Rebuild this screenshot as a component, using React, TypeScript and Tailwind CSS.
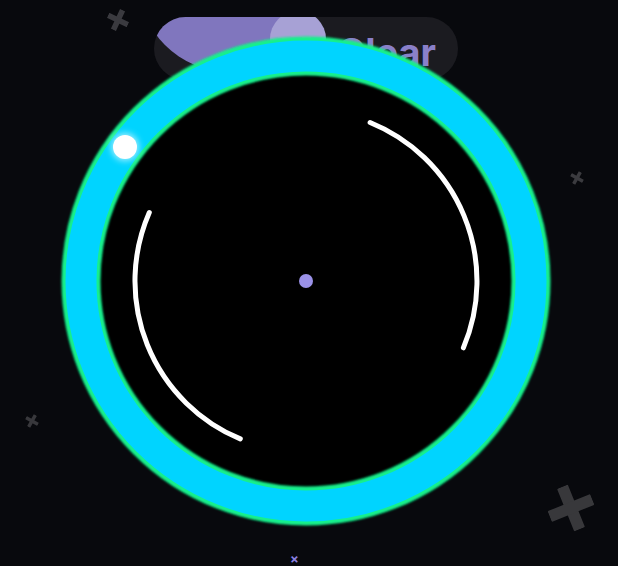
import React from "react";

const Plus: React.FC<{ className: string }> = ({ className }) => (
  <svg viewBox="0 0 20 20" className={className}>
    <rect x="7.5" y="0" width="5" height="20" rx="0.5" fill="currentColor" />
    <rect x="0" y="7.5" width="20" height="5" rx="0.5" fill="currentColor" />
  </svg>
);

const App: React.FC = () => {
  return (
    <div className="relative w-[618px] h-[566px] overflow-hidden bg-[#08090d] font-['Inter','Liberation_Sans',sans-serif]">
      {/* toggle pill behind the ring */}
      <div className="flex justify-center pt-[17px] pr-[6px]">
        <div className="relative w-[304px] h-[63px] rounded-full bg-[#1b1b20] overflow-hidden flex items-center justify-end pr-[22px]">
          <div className="absolute left-[-16px] top-[-129px] w-[184px] h-[184px] rounded-full bg-[#8076be]" />
          <div className="absolute left-[116px] top-[-6px] w-[56px] h-[56px] rounded-full bg-[#a7a1d5]" />
          <span className="relative text-[38px] font-bold leading-none text-[#8a80c9] mt-[6px]">Clear</span>
        </div>
      </div>

      {/* decorative crosses */}
      <Plus className="absolute left-[107px] top-[9px] w-[22px] h-[22px] rotate-[25deg] text-[#3a3a3f]" />
      <Plus className="absolute left-[570px] top-[171px] w-[14px] h-[14px] rotate-[30deg] text-[#3b3b3f]" />
      <Plus className="absolute left-[25px] top-[414px] w-[14px] h-[14px] rotate-[30deg] text-[#38383c]" />
      <Plus className="absolute left-[548px] top-[485px] w-[46px] h-[46px] rotate-[-22deg] text-[#38383b]" />
      <div className="absolute left-[290px] top-[553px] text-[13px] font-bold leading-none text-[#8a80e0]">×</div>

      {/* dial */}
      <svg className="absolute inset-0" width="618" height="566" viewBox="0 0 618 566">
        <defs>
          <filter id="glow" x="-20%" y="-20%" width="140%" height="140%">
            <feGaussianBlur stdDeviation="1.2" />
          </filter>
          <filter id="knobGlow" x="-100%" y="-100%" width="300%" height="300%">
            <feGaussianBlur stdDeviation="3" />
          </filter>
        </defs>
        <circle cx="306" cy="281" r="206" fill="#000" />
        <circle cx="306" cy="281" r="225" fill="none" stroke="#12f08c" strokeWidth="39" filter="url(#glow)" />
        <circle cx="306" cy="281" r="225" fill="none" stroke="#00d4ff" strokeWidth="31" />
        <path
          d="M370.1 122.5 A171 171 0 0 1 463.4 347.8"
          fill="none"
          stroke="#fff"
          strokeWidth="5"
          strokeLinecap="round"
        />
        <path
          d="M240.3 438.9 A171 171 0 0 1 149.3 212.5"
          fill="none"
          stroke="#fff"
          strokeWidth="5"
          strokeLinecap="round"
        />
        <circle cx="306" cy="281" r="7" fill="#9b92e8" />
        <circle cx="125" cy="147" r="14" fill="#dff8ff" opacity="0.7" filter="url(#knobGlow)" />
        <circle cx="125" cy="147" r="12" fill="#fff" />
      </svg>
    </div>
  );
};

export default App;
